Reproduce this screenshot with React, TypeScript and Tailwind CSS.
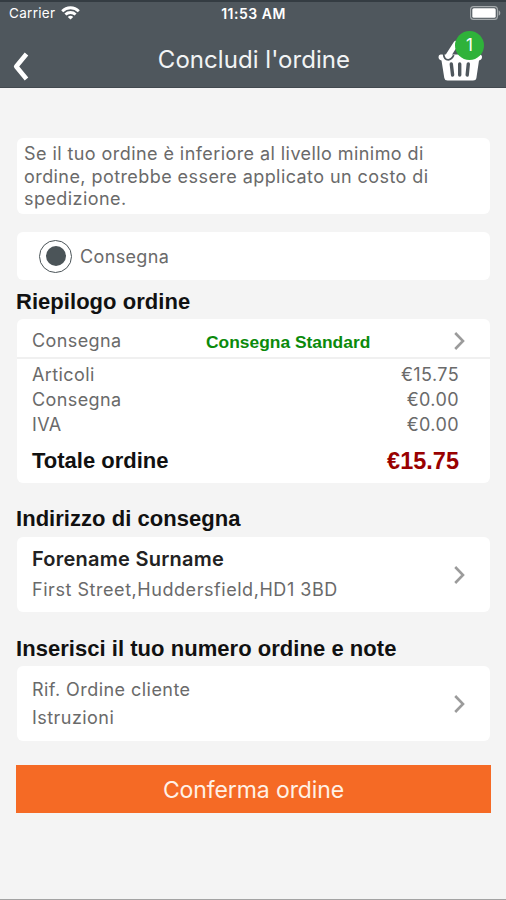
import React from 'react';

const totals = [
  { label: 'Articoli', value: '€15.75' },
  { label: 'Consegna', value: '€0.00' },
  { label: 'IVA', value: '€0.00' },
];

const Chevron: React.FC = () => (
  <svg width="12" height="20" viewBox="0 0 12 20" fill="none" stroke="#9b9b9b" strokeWidth="2.6" className="shrink-0">
    <path d="M2.2 2 L10 10 L2.2 18" />
  </svg>
);

const StatusBar: React.FC = () => (
  <div className="grid h-[25px] grid-cols-3 items-center border-t-2 border-[#343c42] pr-[5px] pl-[9px] text-white">
    <div className="flex items-center gap-[6px]">
      <span className="text-[13.5px] leading-none tracking-[0.3px]">Carrier</span>
      <svg width="19" height="14" viewBox="0 0 19 14" fill="none" stroke="#fff" strokeWidth="2.8" className="-mt-px">
        <path d="M1.2 5.2 C5.8 0.6 13.2 0.6 17.8 5.2" />
        <path d="M4.4 8.5 C7.2 5.8 11.8 5.8 14.6 8.5" />
        <path d="M6.8 10.9 C8.3 9.5 10.7 9.5 12.2 10.9 L9.5 13.6 Z" fill="#fff" stroke="none" />
      </svg>
    </div>
    <span className="-ml-[3px] text-center text-[14px] leading-none font-semibold tracking-[0.5px]">11:53 AM</span>
    <svg width="31" height="14" viewBox="0 0 31 14" className="-mt-[2px] justify-self-end">
      <rect x="0.6" y="0.6" width="26.8" height="12.8" rx="3" fill="none" stroke="#a5aaad" strokeWidth="1.1" />
      <rect x="2.3" y="2.3" width="23.4" height="9.4" rx="1.5" fill="#fff" />
      <path d="M28.6 4.2 C30.9 5.4 30.9 8.6 28.6 9.8 Z" fill="#a5aaad" />
    </svg>
  </div>
);

const Basket: React.FC = () => (
  <div className="relative h-[50px] w-[48px]">
    <svg width="48" height="50" viewBox="0 0 48 50">
      <path d="M2.5 22.5 H41.5 Q44 22.5 44 25 Q44 27.5 41 28.5 L38.4 46 Q38 48.5 35 48.5 H9.5 Q6.7 48.5 6.3 46 L3.5 28.5 Q0.5 27.5 0.5 25 Q0.5 22.5 2.5 22.5 Z" fill="#fff" />
      <path d="M5.6 22 Q6 27.8 10.3 27.8 Q13.5 27.8 15.8 23.2" stroke="#4f575d" strokeWidth="1.8" fill="none" />
      <path d="M10.3 23.5 L18 11.5" stroke="#fff" strokeWidth="5.2" strokeLinecap="round" />
      <path d="M13.3 32 L14.6 43 M21.7 32 V43 M30.3 32 L29.2 43" stroke="#4f575d" strokeWidth="3.4" strokeLinecap="round" />
    </svg>
    <span className="absolute -top-px left-[17px] flex h-[29px] w-[29px] items-center justify-center rounded-full bg-[#2fb23a] text-[17px] leading-none text-white">1</span>
  </div>
);

const App: React.FC = () => {
  return (
    <div className="flex h-[900px] w-[506px] flex-col border-b border-[#a3a3a3] bg-[#f4f4f4] font-['Inter','Liberation_Sans',sans-serif] text-[18px] text-[#6a6a6a]">
      <header className="h-[88px] border-b border-[#42494f] bg-[#4f575d]">
        <StatusBar />
        <div className="grid h-[62px] grid-cols-[60px_1fr_68px] pl-[12px]">
          <svg width="18" height="30" viewBox="0 0 18 30" fill="none" stroke="#fff" strokeWidth="4.6" className="mt-[27px]">
            <path d="M14.5 2 L4.2 14.5 L14.5 27" strokeLinejoin="round" />
          </svg>
          <h1 className="mt-[19px] -ml-[2px] text-center text-[24px] leading-[32px] tracking-[0.05px] text-[#f2f4f5]">Concludi l'ordine</h1>
          <div className="mt-[7px]">
            <Basket />
          </div>
        </div>
      </header>

      <main className="flex flex-col pt-[50px] pr-[16px] pl-[17px] [&_h2]:-ml-px [&_h2]:font-['Liberation_Sans',Arial,sans-serif] [&_h2]:text-[22px] [&_h2]:leading-[26px] [&_h2]:font-bold [&_h2]:tracking-[0.04px] [&_h2]:text-[#111]">
        <p className="h-[76px] rounded-[6px] bg-white pt-[5px] pl-[7px] leading-[22.5px] tracking-[0.43px]">
          Se il tuo ordine è inferiore al livello minimo di<br />
          ordine, potrebbe essere applicato un costo di<br />
          spedizione.
        </p>

        <label className="mt-[18px] flex h-[48px] items-center gap-[8px] rounded-[6px] bg-white pl-[22px] tracking-[0.35px]">
          <span className="flex h-[33px] w-[33px] items-center justify-center rounded-full border-[1.5px] border-[#4b5458]">
            <span className="h-[20px] w-[20px] rounded-full bg-[#4b5458]" />
          </span>
          Consegna
        </label>

        <h2 className="mt-[9px]">Riepilogo ordine</h2>
        <section className="mt-[4px] h-[164px] rounded-[6px] bg-white tracking-[0.4px]">
          <div className="flex h-[40px] items-center border-b-2 border-[#f0f0f0] pt-[6px] pr-[25px] pl-[15px]">
            <span className="-mt-px w-[174px]">Consegna</span>
            <span className="flex-1 pt-[2px] font-['Liberation_Sans',Arial,sans-serif] text-[17.4px] font-bold tracking-normal text-[#0b8a0b]">Consegna Standard</span>
            <Chevron />
          </div>
          <div className="pr-[31px] pl-[15px]">
            {totals.map((row) => (
              <div key={row.label} className="flex h-[25px] items-center justify-between pt-[6px]">
                <span>{row.label}</span>
                <span>{row.value}</span>
              </div>
            ))}
            <div className="mt-[13px] flex h-[28px] items-center justify-between font-['Liberation_Sans',Arial,sans-serif] font-bold tracking-normal">
              <span className="-mt-[2px] text-[22px] text-[#111]">Totale ordine</span>
              <span className="mt-px text-[23.5px] text-[#990000]">€15.75</span>
            </div>
          </div>
        </section>

        <h2 className="mt-[23px]">Indirizzo di consegna</h2>
        <section className="mt-[5px] flex h-[75px] items-center justify-between rounded-[6px] bg-white pr-[25px] pl-[15px]">
          <div>
            <div className="text-[20px] leading-[30px] font-semibold tracking-[0.25px] text-[#222]">Forename Surname</div>
            <div className="leading-[32px] tracking-[0.55px]">First Street,Huddersfield,HD1 3BD</div>
          </div>
          <Chevron />
        </section>

        <h2 className="mt-[24px]">Inserisci il tuo numero ordine e note</h2>
        <section className="mt-[4px] flex h-[75px] items-center justify-between rounded-[6px] bg-white pr-[25px] pl-[15px]">
          <div className="leading-[28px] tracking-[0.45px]">
            <div>Rif. Ordine cliente</div>
            <div>Istruzioni</div>
          </div>
          <Chevron />
        </section>

        <button className="-mx-px mt-[24px] h-[48px] bg-[#f56a25] pt-[2px] text-[23px] tracking-[-0.1px] text-[#fff1e6]">Conferma ordine</button>
      </main>
    </div>
  );
};

export default App;
